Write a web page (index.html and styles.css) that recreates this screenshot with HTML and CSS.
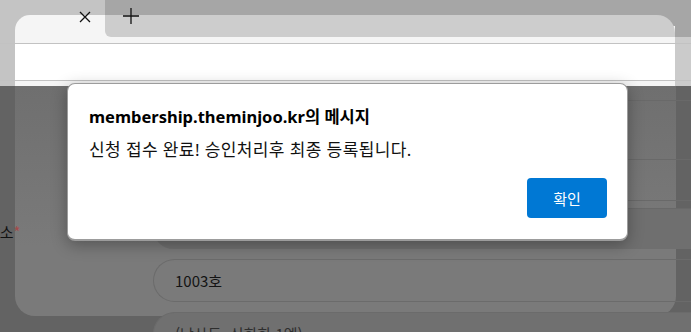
FILE: index.html
```html
<!DOCTYPE html>
<html lang="ko">
<head>
    <meta charset="UTF-8">
    <meta name="viewport" content="width=device-width, initial-scale=1.0">
    <title>membership.theminjoo.kr</title>
    <link rel="stylesheet" href="styles.css">
</head>
<body>
    <div class="tabstrip">
        <div class="tab-left">
            <div class="tab"></div>
        </div>
        <div class="strip-mid">
            <div class="strip-block"></div>
        </div>
        <svg class="tab-close" width="12" height="12" viewBox="0 0 12 12"><path d="M1 1L11 11M11 1L1 11" stroke="#111" stroke-width="1.3"/></svg>
        <svg class="tab-new" width="18" height="18" viewBox="0 0 18 18"><path d="M9 1V17M1 9H17" stroke="#111" stroke-width="1.3"/></svg>
    </div>
    <div class="toolbar">
        <div class="urlbar"></div>
    </div>

    <div class="page">
        <div class="panel">
            <div class="label-col">
                <div class="label">주소<span class="req">*</span></div>
            </div>
            <div class="fields">
                <div class="field field-end"></div>
                <div class="field field-b"></div>
                <div class="field field-c"></div>
                <div class="field field-d">1003호</div>
                <div class="field field-e">(남산동, 신화한 1엘)</div>
            </div>
        </div>
    </div>

    <div class="dialog">
        <div class="dialog-title">membership.theminjoo.kr의 메시지</div>
        <div class="dialog-text">신청 접수 완료! 승인처리후 최종 등록됩니다.</div>
        <div class="dialog-actions">
            <button class="btn-ok">확인</button>
        </div>
    </div>
</body>
</html>
```

FILE: styles.css
```css
body {
    margin: 0;
    width: 691px;
    height: 332px;
    overflow: hidden;
    font-family: "Noto Sans", "Noto Sans CJK KR", sans-serif;
    position: relative;
}

/* browser chrome (dimmed) */
.tabstrip {
    display: flex;
    height: 37px;
    background: #a6a6a6;
}

.tab-left {
    width: 105px;
    padding: 15px 0 0 15px;
    box-sizing: border-box;
    background: #c4c4c4;
}

.tab {
    height: 22px;
    background: #f5f5f5;
    border-top-left-radius: 15px;
}

.strip-mid {
    width: 570px;
    background: linear-gradient(#a6a6a6 26px, #f5f5f5 26px);
}

.strip-block {
    margin-top: 15px;
    height: 22px;
    background: #cdcdcd;
    border-radius: 0 18px 0 6px;
}

.tab-close {
    position: absolute;
    left: 79px;
    top: 11px;
}

.tab-new {
    position: absolute;
    left: 122px;
    top: 7px;
}

.toolbar {
    height: 49px;
    padding-top: 6px;
    box-sizing: border-box;
    background: linear-gradient(to right, #c4c4c4 15px, #f5f5f5 15px, #f5f5f5 675px, #cbcbcb 675px);
}

.urlbar {
    height: 38px;
    box-sizing: border-box;
    border-top: 1px solid #c2c2c2;
    border-bottom: 1px solid #c2c2c2;
    background: linear-gradient(to right, #c4c4c4 15px, #fff 15px, #fff 675px, #cbcbcb 675px);
}

/* page behind the overlay */
.page {
    display: flex;
    height: 246px;
    background: #636363;
}

.panel {
    display: flex;
    margin-left: 15px;
    width: 661px;
    height: 230px;
    background: linear-gradient(#6f6f6f, #7a7a7a 70%);
    border-radius: 0 0 20px 20px;
}

.label-col {
    width: 167px;
    margin-left: -29px;
    padding-top: 135px;
    box-sizing: border-box;
}

.label {
    font-family: "Noto Sans CJK KR", sans-serif;
    font-size: 15px;
    color: #111;
}

.req {
    color: #a44a4a;
}

.fields {
    flex: 1;
    margin-right: -15px;
    display: flex;
    flex-direction: column;
}

.field {
    box-sizing: border-box;
    flex-shrink: 0;
}

.field-end {
    height: 15px;
    border-bottom: 1px solid #696969;
}

.field-b {
    margin-top: 58px;
    height: 42px;
    border: 1px solid #696969;
    border-right: 0;
    border-radius: 21px 0 0 21px;
}

.field-c {
    margin-top: 7px;
    height: 41px;
    background: #6f6f6f;
    border-top: 1px solid #696969;
    border-radius: 21px 0 0 21px;
}

.field-d,
.field-e {
    height: 43px;
    padding-left: 21px;
    display: flex;
    align-items: center;
    font-family: "Noto Sans CJK KR", sans-serif;
    font-size: 15px;
    border: 1px solid #6b6b6b;
    border-right: 0;
    border-radius: 22px 0 0 22px;
}

.field-d {
    margin-top: 10px;
    color: #141414;
}

.field-e {
    margin-top: 10px;
    color: #2e2e2e;
    background: #707070;
}

/* alert dialog */
.dialog {
    position: absolute;
    left: 67px;
    top: 83px;
    width: 561px;
    height: 158px;
    box-sizing: border-box;
    padding: 21px 20px 0 21px;
    background: #fff;
    border: 1px solid #9c9c9c;
    border-bottom-width: 2px;
    border-radius: 8px;
    box-shadow: 0 4px 16px rgba(0, 0, 0, 0.3);
}

.dialog-title {
    font-size: 16.5px;
    font-weight: bold;
    color: #000;
    line-height: 24px;
}

.dialog-text {
    margin-top: 10px;
    font-size: 17px;
    letter-spacing: 0.4px;
    color: #111;
    line-height: 22px;
}

.dialog-actions {
    display: flex;
    justify-content: flex-end;
    margin-top: 17px;
}

.btn-ok {
    width: 80px;
    height: 40px;
    border: 0;
    border-radius: 4px;
    background: #0078d4;
    color: #fff;
    font-family: "Noto Sans CJK KR", sans-serif;
    font-size: 15px;
}
```
